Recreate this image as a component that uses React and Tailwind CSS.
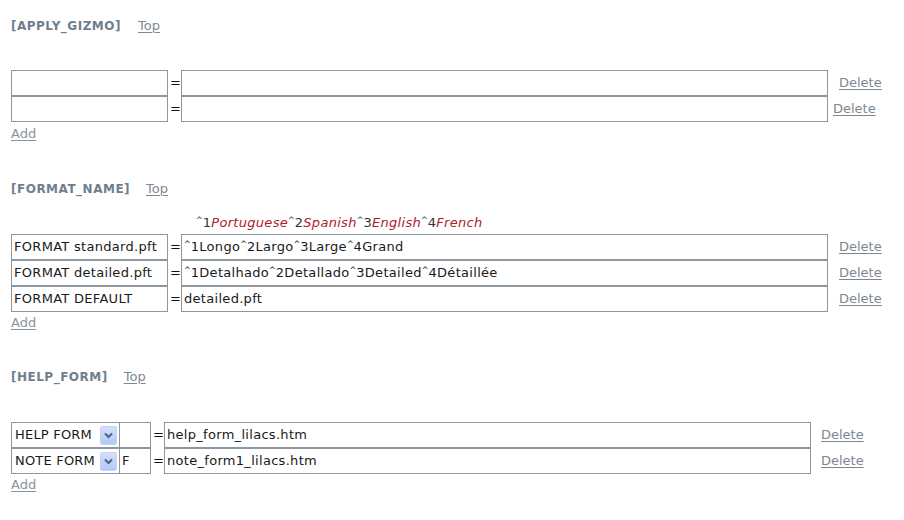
const FONT = { fontFamily: '"DejaVu Sans", Verdana, sans-serif' };

// the reference font draws "^" much narrower than DejaVu does
function Caret() {
  return <span className="relative -top-[4px] text-[8px] tracking-normal">^</span>;
}

function Carets({ text, italicClass }) {
  const parts = text.split("^");
  return (
    <>
      {parts.map((p, i) => {
        if (i === 0) return <span key={i}>{p}</span>;
        const num = p[0];
        const word = p.slice(1);
        return (
          <span key={i}>
            <Caret />
            {num}
            {italicClass ? <i className={italicClass}>{word}</i> : word}
          </span>
        );
      })}
    </>
  );
}

function Heading({ name, gap = 17 }) {
  return (
    <div className="flex items-center h-[16px] leading-[16px]">
      <span className="font-bold text-[12px] text-[#6f7e8e] tracking-[0.5px]">[{name}]</span>
      <a href="#" className="text-[13px] text-[#7d8792] underline underline-offset-2" style={{ marginLeft: gap }}>Top</a>
    </div>
  );
}

function Box({ value, w, className = "" }) {
  return (
    <div
      className={`h-[26px] shrink-0 border border-[#8d979d] bg-white flex items-center px-[2px] text-[13px] tracking-[0.3px] text-[#1a1a1a] whitespace-nowrap overflow-hidden ${className}`}
      style={{ width: w }}
    >
      {value}
    </div>
  );
}

function Eq({ w = 13 }) {
  return (
    <div className="h-[26px] shrink-0 flex items-center pl-[2px] text-[13px] text-[#111]" style={{ width: w }}>=</div>
  );
}

function Del({ ml = 11 }) {
  return (
    <a href="#" className="text-[13px] text-[#7d8792] underline underline-offset-2" style={{ marginLeft: ml }}>Delete</a>
  );
}

function Add() {
  return (
    <div className="h-[16px] leading-[16px] text-[13px]">
      <a href="#" className="text-[#8a939c] underline underline-offset-2">Add</a>
    </div>
  );
}

function Select({ value }) {
  return (
    <div className="h-[26px] w-[109px] shrink-0 border border-[#8d979d] bg-white flex items-center pl-[3px] pr-[2px] text-[13px] tracking-[0.2px] text-[#1a1a1a]">
      <span className="flex-1 whitespace-nowrap overflow-hidden">{value}</span>
      <span className="w-[17px] h-[19px] shrink-0 rounded-[2px] bg-gradient-to-b from-[#d4e0fb] to-[#b3c8f5] border border-[#c3d3f6] flex items-center justify-center">
        <svg width="9" height="7" viewBox="0 0 9 7">
          <path d="M1 1.5 L4.5 5 L8 1.5" fill="none" stroke="#4d6185" strokeWidth="2" />
        </svg>
      </span>
    </div>
  );
}

export default function App() {
  return (
    <div className="w-[904px] h-[520px] bg-white pl-[11px] pt-[18px]" style={FONT}>
      <Heading name="APPLY_GIZMO" />
      <div className="mt-[36px]">
        <div className="flex items-center">
          <Box w={157} /><Eq /><Box w={647} /><Del />
        </div>
        <div className="flex items-center">
          <Box w={157} /><Eq /><Box w={647} /><Del ml={5} />
        </div>
      </div>
      <div className="mt-[4px]"><Add /></div>

      <div className="mt-[39px]"><Heading name="FORMAT_NAME" gap={16} /></div>
      <div className="mt-[18px] h-[16px] leading-[16px] text-[13px] tracking-[0.3px] pl-[185px] text-[#333]">
        <Carets text="^1Portuguese^2Spanish^3English^4French" italicClass="text-[#b0202a]" />
      </div>
      <div className="mt-[3px]">
        <div className="flex items-center">
          <Box w={157} value="FORMAT standard.pft" /><Eq />
          <Box w={647} value={<span><Carets text="^1Longo^2Largo^3Large^4Grand" /></span>} /><Del />
        </div>
        <div className="flex items-center">
          <Box w={157} value="FORMAT detailed.pft" /><Eq />
          <Box w={647} value={<span><Carets text="^1Detalhado^2Detallado^3Detailed^4Détaillée" /></span>} /><Del />
        </div>
        <div className="flex items-center">
          <Box w={157} value="FORMAT DEFAULT" /><Eq /><Box w={647} value="detailed.pft" /><Del />
        </div>
      </div>
      <div className="mt-[3px]"><Add /></div>

      <div className="mt-[38px]"><Heading name="HELP_FORM" gap={16} /></div>
      <div className="mt-[37px]">
        <div className="flex items-center">
          <Select value="HELP FORM" /><Box w={32} className="-ml-px" /><Eq /><Box w={647} value="help_form_lilacs.htm" /><Del ml={10} />
        </div>
        <div className="flex items-center">
          <Select value="NOTE FORM" /><Box w={32} className="-ml-px" value="F" /><Eq /><Box w={647} value="note_form1_lilacs.htm" /><Del ml={10} />
        </div>
      </div>
      <div className="mt-[3px]"><Add /></div>
    </div>
  );
}
